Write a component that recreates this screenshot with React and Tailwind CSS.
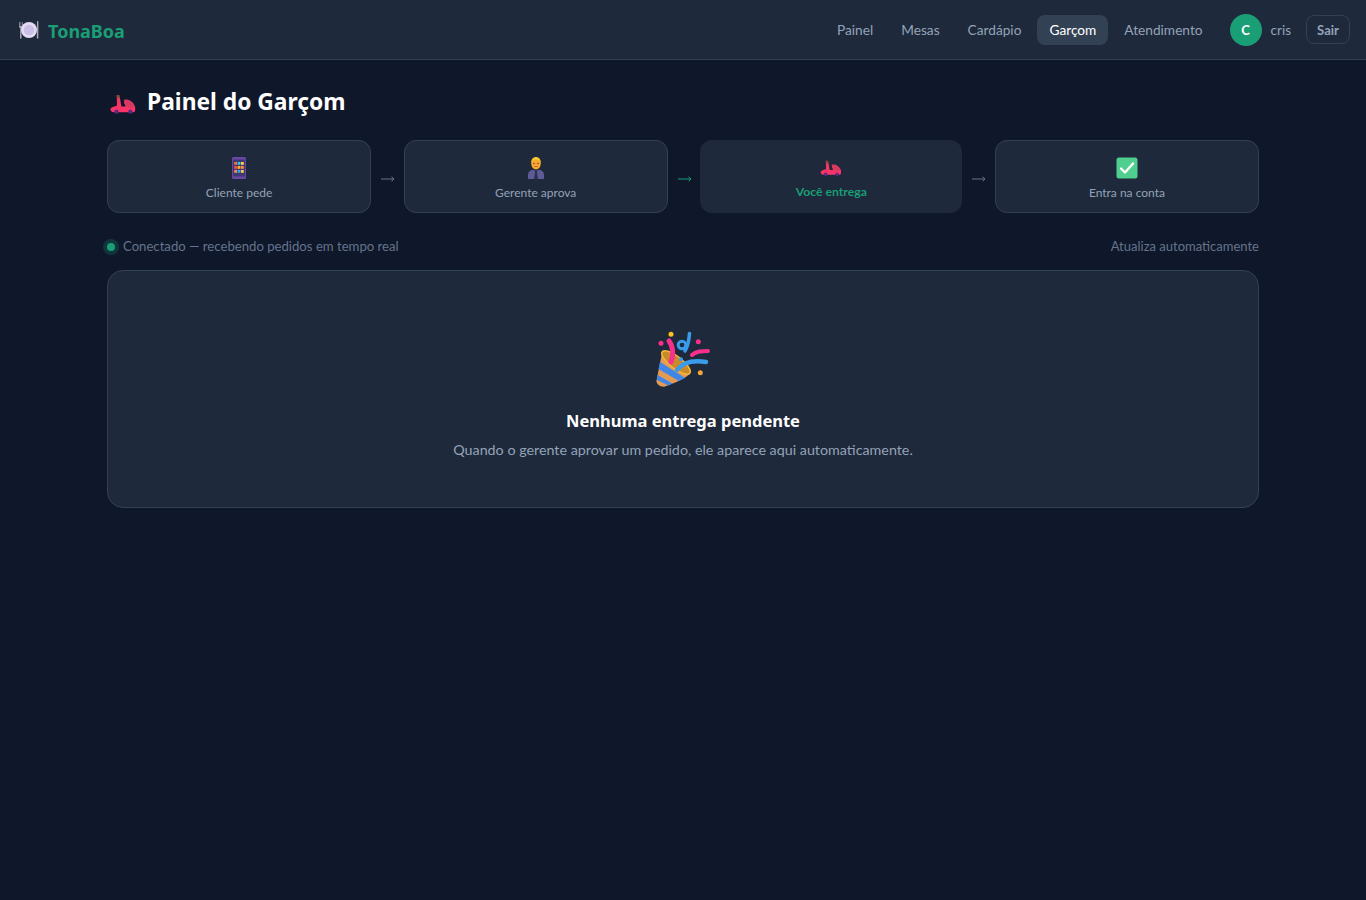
import React from 'react';

function Scooter({ className }) {
  return (
    <svg viewBox="0 0 32 24" className={className}>
      <path d="M8.500 3h3.500l2 12h5c0-2-1-3.500-2-5C22 6 29 9 31 16v4c0 1-1 2-2 2H5c-3 0-4.500-1.500-4.500-3.500S3.500 15 8.500 14z" fill="#fb3468" />
      <path d="M17 7c5-1.500 11 1 13.500 8-4 2.500-8.500 1.500-11-1-1-1.500-2-4-2.500-7z" fill="#d63a60" />
      <rect x="8" y="1" width="3.800" height="4" fill="#8a4a3a" />
      <circle cx="8" cy="21.500" r="2.600" fill="#5b2a86" />
      <circle cx="25" cy="21.500" r="2.600" fill="#5b2a86" />
    </svg>
  );
}

function Phone({ className }) {
  const colors = ['#f8712f', '#26c9fc', '#ffd43b', '#f8512f', '#ffb02e', '#ff8a3d', '#ff8a3d', '#26a6fc', '#ffc83d'];
  return (
    <svg viewBox="0 0 16 24" className={className}>
      <rect x="1" y="1" width="14" height="22" rx="1.500" fill="#6b46a8" />
      <rect x="2" y="3.500" width="12" height="17" fill="#3d3a70" />
      {colors.map((c, i) => (
        <rect key={i} x={3.200 + (i % 3) * 3.400} y={6 + Math.floor(i / 3) * 4} width="2.800" height="2.800" fill={c} />
      ))}
    </svg>
  );
}

function Manager({ className }) {
  return (
    <svg viewBox="0 0 16 22" className={className}>
      <path d="M0 22v-4c0-3 2-5 5-5h6c3 0 5 2 5 5v4z" fill="#5d5c94" />
      <path d="M6.500 13h3L9 15l1 7H6l1-7z" fill="#2f2e55" />
      <ellipse cx="8" cy="6.500" rx="4.800" ry="6" fill="#f9a72f" />
      <path d="M3.200 6c0-4 2-6 4.800-6s4.800 2 4.800 6c-1-2-2.400-3-4.800-3S4.200 4 3.200 6z" fill="#f7c331" />
      <circle cx="6" cy="6.500" r="0.800" fill="#7d4533" />
      <circle cx="10" cy="6.500" r="0.800" fill="#7d4533" />
      <path d="M6.500 9.500h3" stroke="#c9672a" strokeWidth="1" />
    </svg>
  );
}

function Check({ className }) {
  return (
    <svg viewBox="0 0 22 22" className={className}>
      <rect x="0.500" y="0.500" width="21" height="21" rx="2.500" fill="#4fcf8f" />
      <path d="M5 11.500l4 4 8-9" fill="none" stroke="#fff" strokeWidth="2.400" strokeLinecap="round" strokeLinejoin="round" />
    </svg>
  );
}

function Plate({ className }) {
  return (
    <svg viewBox="0 0 22 20" className={className}>
      <path d="M1 2v4c0 1 .6 2 1.200 2.400L2 18c0 1 1.600 1 1.600 0l-.2-9.600C4 8 4.600 7 4.600 6V2H4v4h-.8V2h-.6v4h-.9V2z" fill="#a8a3b5" />
      <path d="M19 1c1 0 1.400.5 1.400 1.500V18c0 1-1.600 1-1.600 0z" fill="#a8a3b5" />
      <circle cx="11" cy="10" r="8" fill="#e3dcf2" />
      <circle cx="11" cy="10" r="5.300" fill="#cbbfe8" />
    </svg>
  );
}

function Popper({ className }) {
  return (
    <svg viewBox="0 0 56 56" className={className}>
      <path d="M7.300 20.700L35 42.300C32 47 20 52 10 55.500c-4 1-9-2-8.500-6z" fill="#e39a55" />
      <path d="M5 31l25 16-6 3L3.500 38z" fill="#3f86e8" />
      <path d="M2.500 44l15 8.500-4 2L2 49z" fill="#3f86e8" />
      <ellipse cx="21" cy="31.500" rx="17.500" ry="6" transform="rotate(38 21 31.500)" fill="#c98a2a" stroke="#f2b53d" strokeWidth="1.500" />
      <path d="M14 10C18 15 19 24 16 31" fill="none" stroke="#f92f8e" strokeWidth="5" strokeLinecap="round" />
      <path d="M22 39C28 31 38 29 51 31" fill="none" stroke="#3a9bea" strokeWidth="4.500" strokeLinecap="round" />
      <path d="M37 24C41 20 47 20 53 20" fill="none" stroke="#f92f8e" strokeWidth="4" strokeLinecap="round" />
      <path d="M34.500 2.500C34 9 33 15 30 20" fill="none" stroke="#3a9bea" strokeWidth="3.500" strokeLinecap="round" />
      <circle cx="27" cy="14" r="3.800" fill="none" stroke="#3a9bea" strokeWidth="3" />
      <circle cx="16" cy="3.300" r="2.500" fill="#fcc21b" />
      <circle cx="6" cy="12.300" r="2.500" fill="#f92f8e" />
      <circle cx="43.300" cy="10.700" r="2.500" fill="#f92f8e" />
      <circle cx="45.300" cy="41.700" r="2.500" fill="#f4a63a" />
      <circle cx="26" cy="28.300" r="2" fill="#3a9bea" />
    </svg>
  );
}

function Step({ icon, label, active }) {
  return (
    <div className={active
      ? 'flex-1 h-[73px] rounded-xl bg-[#1e293b] px-3 pt-[15px] flex flex-col items-center'
      : 'flex-1 h-[73px] rounded-xl bg-[#1e293b] border border-[#334155] px-3 pt-[14px] flex flex-col items-center'}>
      <div className="h-[26px] flex items-center justify-center">{icon}</div>
      <div className={active ? 'mt-[2px] text-[12.2px] font-bold text-[#1a9e75]' : 'mt-[4px] text-xs text-[#94a3b8]'}>{label}</div>
    </div>
  );
}

function Arrow({ active }) {
  return (
    <div className={active ? 'w-[32.5px] pl-px text-[#1a9e75]' : 'w-[32.5px] pl-px text-[#64748b]'}>
      <svg viewBox="0 0 14 8" className="w-[14px] h-2 mx-auto mt-[35px]">
        <path d="M0 4h13M10.500 1.800L13 4l-2.500 2.200" fill="none" stroke="currentColor" strokeWidth="1" />
      </svg>
    </div>
  );
}

export default function App() {
  const links = ['Painel', 'Mesas', 'Cardápio', 'Garçom', 'Atendimento'];

  return (
    <div className="min-h-[900px] bg-[#0f172a] font-['Lato',sans-serif]">
      <nav className="h-[60px] bg-[#1e293b] border-b border-[#334155] pl-[18px] pr-4 flex items-center justify-between">
        <div className="flex items-center gap-2">
          <Plate className="w-[22px] h-5" />
          <span className="pt-[3px] font-['Noto_Sans',sans-serif] text-[18px] font-bold text-[#1a9e75]">TonaBoa</span>
        </div>
        <div className="flex items-center">
          <div className="flex items-center gap-1">
            {links.map((l) => (
              <a key={l} className={l === 'Garçom'
                ? 'px-3 pt-[2px] h-[30px] flex items-center rounded-lg bg-[#334155] text-white text-[13.7px]'
                : 'px-3 pt-[2px] h-[30px] flex items-center rounded-lg text-[#94a3b8] text-[13.7px]'}>{l}</a>
            ))}
          </div>
          <div className="ml-[15px] pt-[2px] w-8 h-8 rounded-full bg-[#1a9e75] text-white text-[13px] font-bold flex items-center justify-center">C</div>
          <span className="ml-[9px] pt-[2px] text-[13.5px] text-[#94a3b8]">cris</span>
          <button className="ml-[15px] pt-[2px] w-11 h-[29px] rounded-lg border border-[#334155] text-[13px] font-bold text-[#94a3b8]">Sair</button>
        </div>
      </nav>

      <main className="max-w-6xl mx-auto pt-[24px]">
        <h1 className="flex items-center gap-[11px] h-9 font-['Noto_Sans',sans-serif] text-[22.8px] font-bold text-white">
          <Scooter className="ml-[3px] mt-[3px] w-[26px] h-[20px]" />
          Painel do Garçom
        </h1>

        <div className="mt-5 flex">
          <Step icon={<Phone className="w-4 h-6" />} label="Cliente pede" />
          <Arrow />
          <Step icon={<Manager className="w-4 h-[22px]" />} label="Gerente aprova" />
          <Arrow active />
          <Step active icon={<Scooter className="w-[22px] h-4" />} label="Você entrega" />
          <Arrow />
          <Step icon={<Check className="w-[22px] h-[22px]" />} label="Entra na conta" />
        </div>

        <div className="mt-6 h-[19px] flex items-center justify-between text-[13px] text-[#64748b]">
          <div className="flex items-center gap-2">
            <span className="w-2 h-2 rounded-full bg-[#1a9e75] shadow-[0_0_0_4px_rgba(16,185,129,0.2)]"></span>
            <span className="text-[13.15px]">Conectado — recebendo pedidos em tempo real</span>
          </div>
          <span>Atualiza automaticamente</span>
        </div>

        <section className="mt-[14px] h-[238px] rounded-2xl bg-[#1e293b] border border-[#334155] flex flex-col items-center pt-[60px]">
          <Popper className="w-14 h-14" />
          <h2 className="mt-[22px] font-['Noto_Sans',sans-serif] text-[16.5px] font-bold text-white">Nenhuma entrega pendente</h2>
          <p className="mt-[5px] text-[14.3px] text-[#94a3b8]">Quando o gerente aprovar um pedido, ele aparece aqui automaticamente.</p>
        </section>
      </main>
    </div>
  );
}
